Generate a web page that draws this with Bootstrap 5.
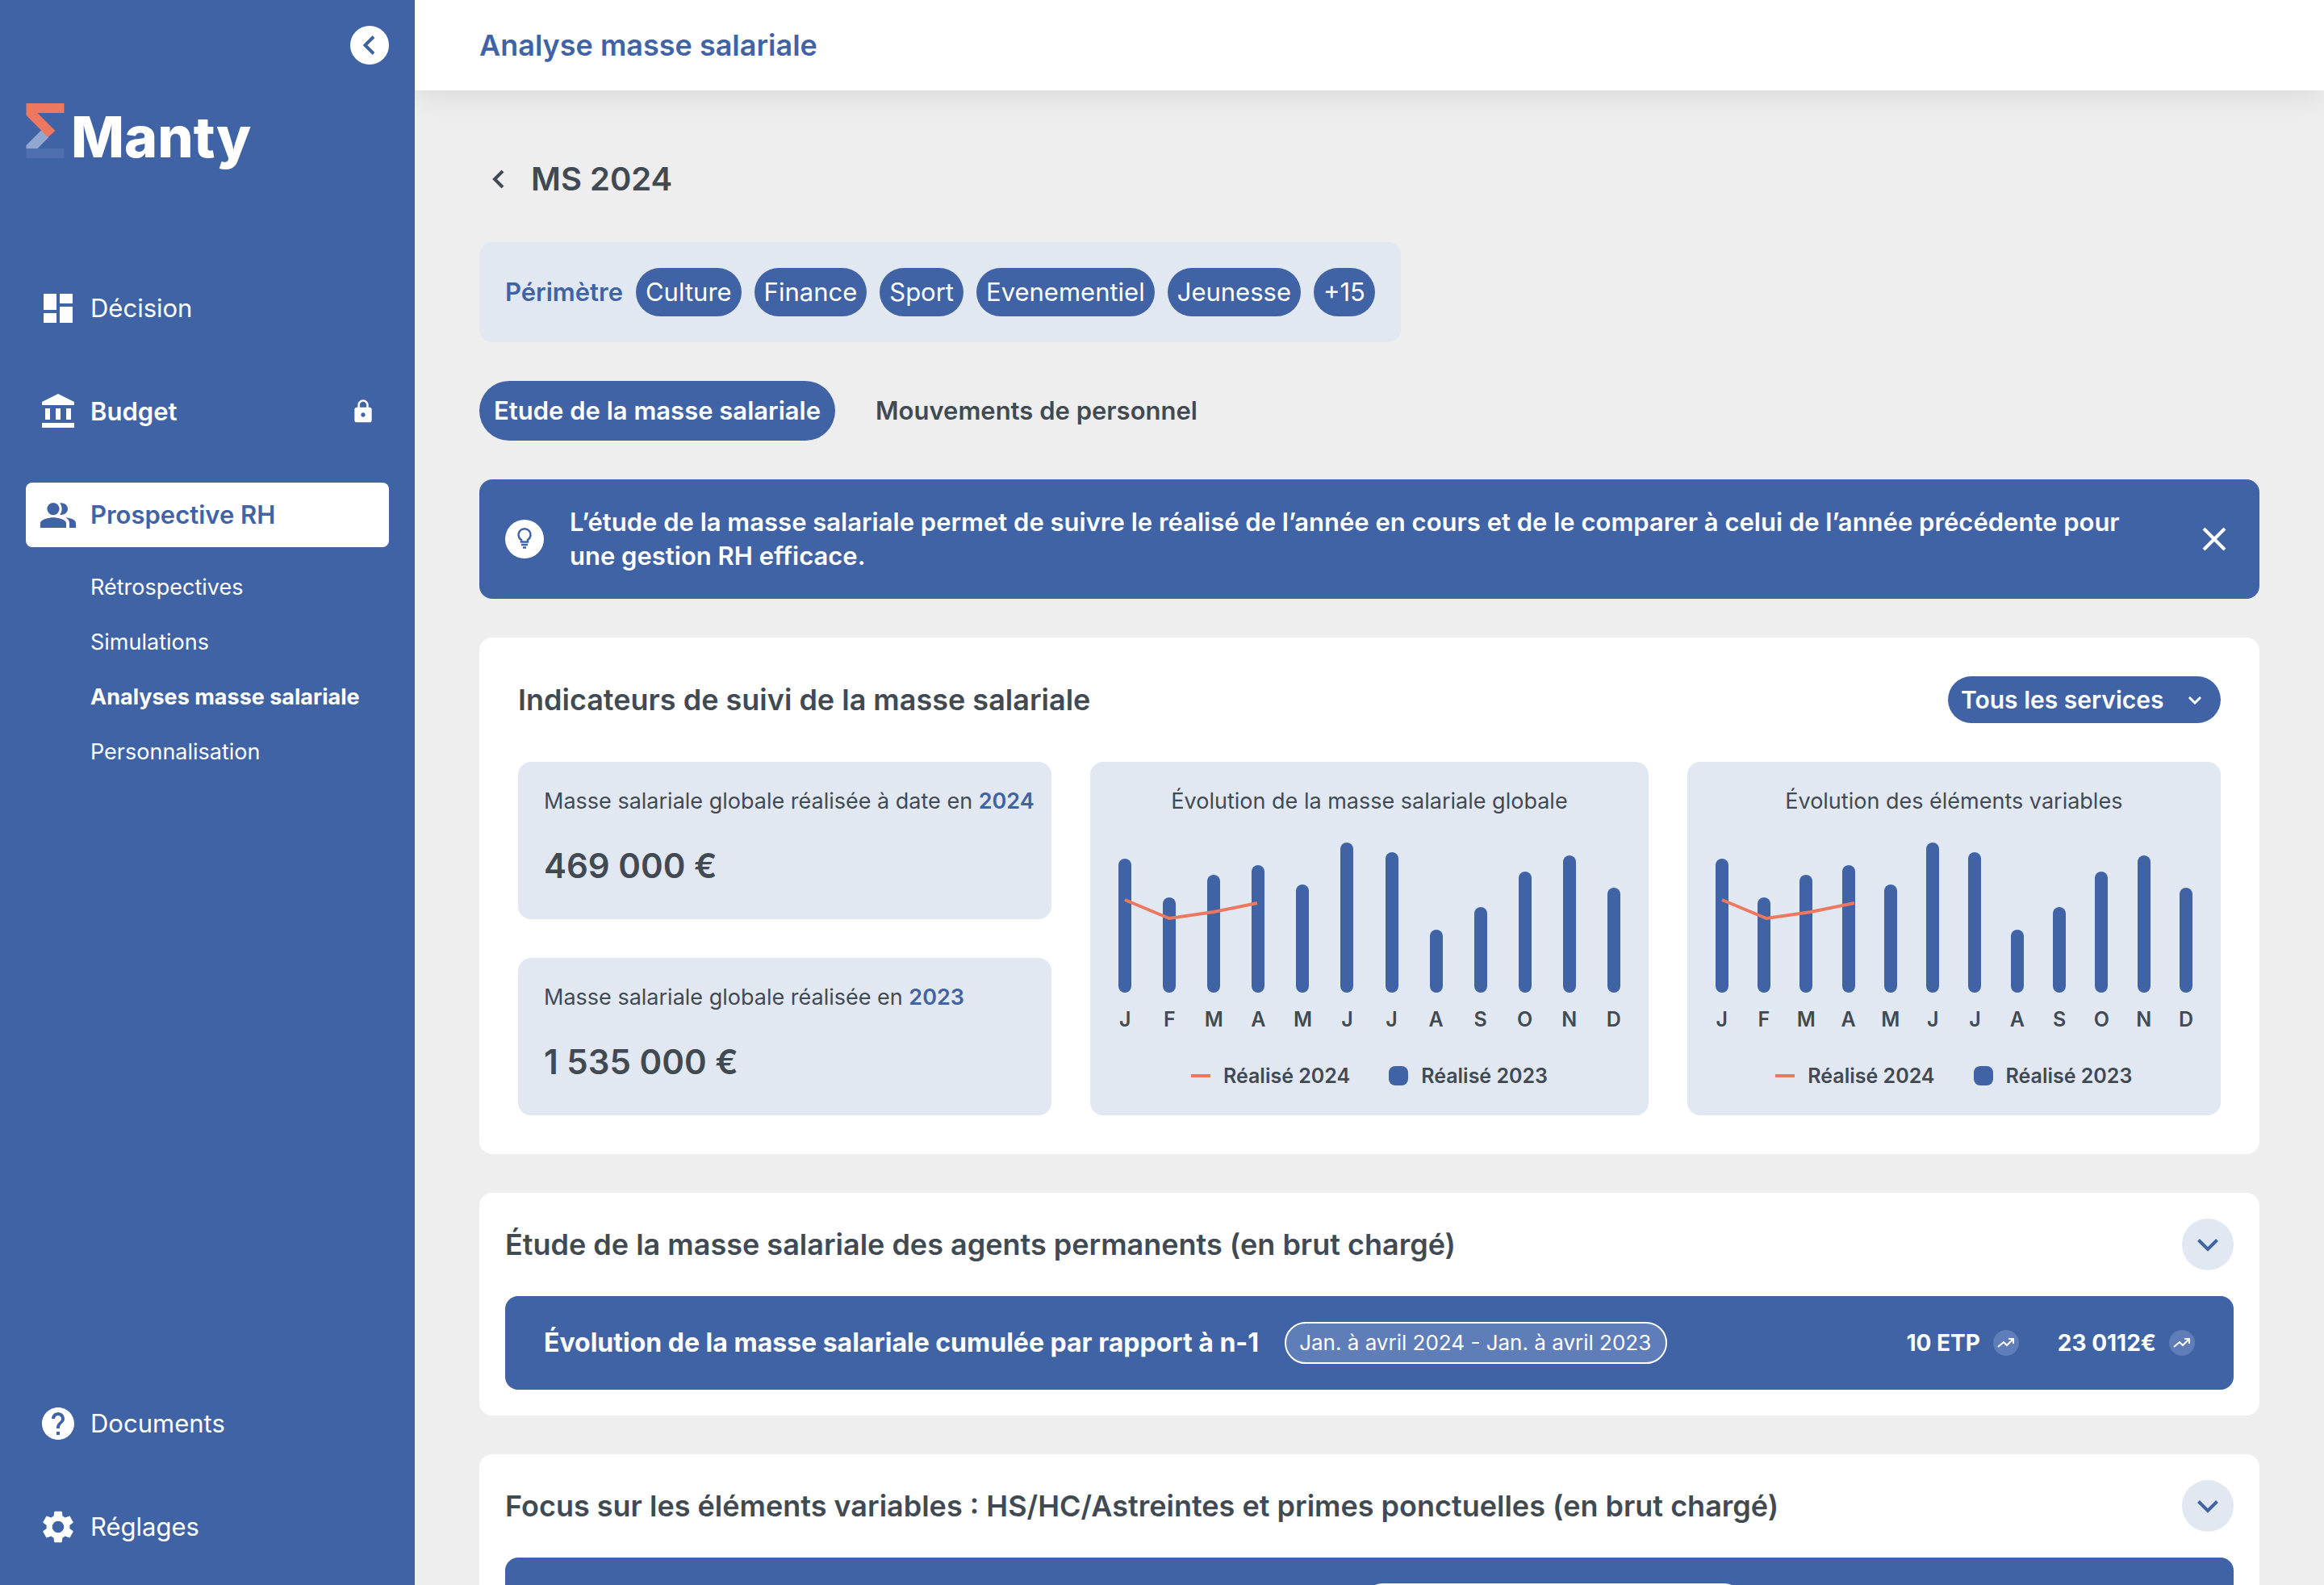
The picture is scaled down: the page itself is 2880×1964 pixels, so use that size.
<!DOCTYPE html>
<html lang="fr">
<head>
<meta charset="utf-8">
<meta name="viewport" content="width=device-width, initial-scale=1">
<title>Manty – Analyse masse salariale</title>
<link rel="stylesheet" href="https://cdn.jsdelivr.net/npm/bootstrap@5.3.0/dist/css/bootstrap.min.css">
<style>
:root{--brand:#4063a5;--pale:#e1e8f2;--ink:#414a53;--coral:#eb785f;--soft:#5f7db8}
body{font-family:Inter,"Open Sans",sans-serif;font-size:31px;line-height:42px;color:var(--ink);background:#eee}
h1,h2,h3,p{margin:0}
svg{display:block;flex:none}
button{border:0;padding:0;background:none;color:inherit}
.text-brand{color:var(--brand)}
.bg-brand{background:var(--brand);color:#fff}
.bg-pale{background:var(--pale)}
.round-lg{border-radius:16px}
.shell{height:100vh;overflow:hidden}
.sidebar{width:514px;flex:none;padding:32px;background:var(--brand);color:#fff}
.sidebar a{color:inherit;text-decoration:none}
.collapse-btn{width:48px;height:48px;background:#fff;color:var(--brand)}
.brand{margin-top:48px;gap:8px;height:70px}
.brand-name{font-size:70px;font-weight:800;line-height:84px}
.menu{margin-top:144px;gap:48px}
.menu-item{height:80px;padding:0 16px;gap:16px;border-radius:8px}
.menu-item.active{background:#fff;color:var(--brand)}
.submenu{margin-top:-32px;padding-left:80px;font-size:27px}
.submenu a{line-height:68px;white-space:nowrap}
.topbar{height:112px;flex:none;padding:0 80px;background:#fff;box-shadow:0 4px 40px rgba(0,0,0,.1);z-index:1}
.title-md{font-size:36px;font-weight:600;line-height:42px}
.content{padding:80px 80px 0;gap:48px}
.page-title{font-size:40px;font-weight:600;line-height:60px}
.back-btn{width:48px;height:60px}
.perimeter{padding:32px;gap:16px}
.chip{height:60px;padding:0 12px;border-radius:30px;line-height:60px}
.tabs{gap:32px}
.tabs .nav-link{height:74px;padding:0 18px;border-radius:37px;color:var(--ink);font-size:31px;font-weight:600;line-height:74px}
.tabs .nav-link.active{background:var(--brand);color:#fff}
.tip{padding:32px;gap:32px;font-weight:600}
.tip-icon{width:48px;height:48px;background:#fff;color:var(--brand)}
.panel{background:#fff;padding:48px}
.service-select{height:58px;width:338px;padding:0 16px;border:0;border-radius:29px;font-size:30px;font-weight:600;appearance:none;
 background:var(--brand) url("data:image/svg+xml,%3Csvg xmlns='http://www.w3.org/2000/svg' viewBox='0 0 24 24'%3E%3Cpath d='M5 9l7 7 7-7' fill='none' stroke='%23fff' stroke-width='3'/%3E%3C/svg%3E") no-repeat right 20px center/24px;color:#fff}
.indicators{display:grid;grid-template-columns:minmax(0,22fr) minmax(0,23fr) minmax(0,22fr);gap:48px;margin-top:48px;font-size:27px;line-height:34px}
.kpis{gap:48px}
.kpi{padding:32px 16px 32px 32px;flex:1;gap:38px;white-space:nowrap}
.kpi-value{font-size:42px;font-weight:600;line-height:50px}
.chart{padding:32px}
.chart-title{font-size:27px;font-weight:400;line-height:34px}
.plot{height:186px;margin-top:34px}
.bar{width:16px;border-radius:8px;background:var(--brand)}
.slot{width:22px}
.trend{position:absolute;left:0;top:0}
.months{margin-top:16px;font-size:25px;font-weight:600}
.legend{gap:48px;margin-top:36px;font-size:25px;font-weight:600}
.key-line{width:24px;height:4px;background:var(--coral)}
.key-box{width:24px;height:24px;border-radius:8px;background:var(--brand)}
.fold{background:#fff;padding:32px;gap:32px;flex:none}
.fold-btn{width:64px;height:64px;background:var(--pale);color:var(--brand)}
.fold-row{height:116px;padding:0 48px;gap:32px;font-size:32px;font-weight:700;white-space:nowrap}
.fold-space{width:48%}
.period{height:52px;min-width:474px;padding:0 16px;border:2px solid #fff;border-radius:26px;background:var(--soft);font-size:26px;font-weight:400;line-height:48px}
.figures{gap:48px;font-size:28px}
.trend-icon{width:32px;height:32px;background:var(--soft)}
</style>
<script src="https://cdn.jsdelivr.net/npm/bootstrap@5.3.0/dist/js/bootstrap.bundle.min.js"></script>
</head>
<body>
<div class="shell d-flex">
  <aside class="sidebar d-flex flex-column">
    <button class="collapse-btn rounded-circle align-self-end" aria-label="Replier le menu">
      <svg width="48" height="48" fill="none" stroke="currentColor" stroke-width="4"><path d="M29 13.500 18.500 24 29 34.500"/></svg>
    </button>
    <a href="#" class="brand d-flex">
      <svg width="48" height="68" viewBox="0 0 47 68"><path fill="#4f70af" d="M0 56h47v12H0z"/><path fill="#92a7cf" d="M0 52 19 33l9 9-14 14H0z"/><path fill="#eb785f" d="M0 0h47v12H14l22 22-9 8L0 15z"/></svg>
      <span class="brand-name">Manty</span>
    </a>
    <nav class="menu d-flex flex-column flex-grow-1">
      <a href="#" class="menu-item d-flex align-items-center">
        <svg width="48" height="48" viewBox="0 0 24 24" fill="currentColor"><path d="M3 13h8V3H3zm0 8h8v-6H3zm10 0h8V11h-8zm0-18v6h8V3z"/></svg>Décision
      </a>
      <a href="#" class="menu-item d-flex align-items-center fw-semibold">
        <svg width="48" height="48" viewBox="0 0 24 24" fill="currentColor"><path d="M12 1 2 6v2h20V6zM4 10h3v7H4zm6.500 0h3v7h-3zm6.500 0h3v7h-3zM2 19h20v3H2z"/></svg>Budget
        <svg class="ms-auto" width="32" height="32" viewBox="0 0 24 24" fill="currentColor"><path d="M18 8h-1V6c0-2.760-2.240-5-5-5S7 3.240 7 6v2H6c-1.100 0-2 .9-2 2v10c0 1.100.9 2 2 2h12c1.100 0 2-.9 2-2V10c0-1.100-.9-2-2-2zm-6 9c-1.100 0-2-.9-2-2s.9-2 2-2 2 .9 2 2-.9 2-2 2zm3.100-9H8.900V6c0-1.710 1.390-3.100 3.100-3.100s3.100 1.390 3.100 3.100z"/></svg>
      </a>
      <a href="#" class="menu-item active d-flex align-items-center fw-semibold">
        <svg width="48" height="48" viewBox="0 0 24 24" fill="currentColor"><circle cx="9" cy="8.300" r="3.800"/><path d="M16.670 13.630C18.040 14.560 19 15.600 19 17v3h4v-3c0-2-3.570-3.100-6.330-3.370zM14 12c2.210 0 4-1.600 4-3.700s-1.790-3.700-4-3.700c-.3 0-.6 0-.9.100.8 1 1.200 2.200 1.200 3.600s-.4 2.600-1.200 3.600c.3.100.6.100.9.100zM9 13.600c-2.670 0-8 1.200-8 3.400v3h16v-3c0-2.200-5.330-3.400-8-3.400z"/></svg>Prospective RH
      </a>
      <div class="submenu d-flex flex-column">
        <a href="#">Rétrospectives</a>
        <a href="#">Simulations</a>
        <a href="#" class="fw-bold">Analyses masse salariale</a>
        <a href="#">Personnalisation</a>
      </div>
      <a href="#" class="menu-item mt-auto d-flex align-items-center">
        <svg width="48" height="48" viewBox="0 0 24 24" fill="currentColor"><path d="M12 2C6.480 2 2 6.480 2 12s4.480 10 10 10 10-4.480 10-10S17.520 2 12 2zm1 17h-2v-2h2v2zm2.070-7.750-.9.920C13.450 12.900 13 13.500 13 15h-2v-.5c0-1.100.450-2.100 1.170-2.830l1.240-1.260c.370-.360.590-.860.590-1.410 0-1.100-.9-2-2-2s-2 .9-2 2H8c0-2.210 1.790-4 4-4s4 1.790 4 4c0 .880-.360 1.680-.930 2.250z"/></svg>Documents
      </a>
      <a href="#" class="menu-item d-flex align-items-center">
        <svg width="48" height="48" viewBox="0 0 24 24" fill="currentColor"><path d="M19.140 12.940c.04-.3.06-.61.06-.94 0-.32-.02-.64-.07-.94l2.030-1.580c.18-.14.23-.41.12-.61l-1.920-3.320c-.12-.22-.37-.29-.59-.22l-2.390.96c-.5-.38-1.030-.7-1.620-.94l-.36-2.540c-.04-.24-.24-.41-.48-.41h-3.840c-.24 0-.43.17-.47.41l-.36 2.540c-.59.24-1.130.57-1.620.94l-2.390-.96c-.22-.08-.47 0-.59.22L2.740 8.870c-.12.21-.08.47.12.61l2.030 1.580c-.05.3-.09.63-.09.94s.02.64.07.94l-2.030 1.580c-.18.14-.23.41-.12.61l1.920 3.320c.12.22.37.29.59.22l2.390-.96c.5.38 1.030.7 1.620.94l.36 2.540c.05.24.24.41.48.41h3.840c.24 0 .44-.17.47-.41l.36-2.540c.59-.24 1.130-.56 1.620-.94l2.390.96c.22.08.47 0 .59-.22l1.920-3.320c.12-.22.07-.47-.12-.61l-2.010-1.580zM12 15.600c-1.980 0-3.600-1.620-3.600-3.600s1.620-3.600 3.600-3.600 3.600 1.620 3.600 3.600-1.620 3.600-3.600 3.600z"/></svg>Réglages
      </a>
    </nav>
  </aside>

  <div class="d-flex flex-column flex-grow-1 overflow-hidden">
    <header class="topbar d-flex align-items-center">
      <span class="title-md text-brand">Analyse masse salariale</span>
    </header>

    <main class="content d-flex flex-column">
      <div class="d-flex align-items-center gap-3">
        <button class="back-btn" aria-label="Retour"><svg width="48" height="60" fill="none" stroke="currentColor" stroke-width="4"><path d="M29 20 19 30l10 10"/></svg></button>
        <h1 class="page-title">MS 2024</h1>
      </div>

      <div class="perimeter bg-pale round-lg d-flex align-items-center align-self-start">
        <span class="fw-semibold text-brand">Périmètre</span>
        <span class="chip bg-brand">Culture</span>
        <span class="chip bg-brand">Finance</span>
        <span class="chip bg-brand">Sport</span>
        <span class="chip bg-brand">Evenementiel</span>
        <span class="chip bg-brand">Jeunesse</span>
        <span class="chip bg-brand">+15</span>
      </div>

      <div class="tabs nav nav-pills" role="tablist">
        <button class="nav-link active" role="tab" aria-selected="true">Etude de la masse salariale</button>
        <button class="nav-link" role="tab" aria-selected="false">Mouvements de personnel</button>
      </div>

      <div class="tip bg-brand round-lg d-flex align-items-center">
        <span class="tip-icon rounded-circle flex-shrink-0">
          <svg width="48" height="48" fill="none" stroke="currentColor" stroke-width="2.500"><path d="M20 27.500v-2.500a7.500 7.500 0 1 1 8 0v2.500z"/><path d="M20 31h8M22 34.500h4"/></svg>
        </span>
        <p class="flex-grow-1">L’étude de la masse salariale permet de suivre le réalisé de l’année en cours et de le comparer à celui de l’année précédente pour une gestion RH efficace.</p>
        <button aria-label="Fermer"><svg width="48" height="48" fill="none" stroke="currentColor" stroke-width="4"><path d="m11 11 26 26M37 11 11 37"/></svg></button>
      </div>

      <section class="panel round-lg">
        <div class="d-flex align-items-center justify-content-between">
          <h2 class="title-md">Indicateurs de suivi de la masse salariale</h2>
          <select class="service-select" aria-label="Services"><option>Tous les services</option></select>
        </div>
        <div class="indicators">
          <div class="kpis d-flex flex-column">
            <div class="kpi bg-pale round-lg d-flex flex-column">
              <p>Masse salariale globale réalisée à date en <span class="fw-semibold text-brand">2024</span></p>
              <p class="kpi-value">469 000 €</p>
            </div>
            <div class="kpi bg-pale round-lg d-flex flex-column">
              <p>Masse salariale globale réalisée en <span class="fw-semibold text-brand">2023</span></p>
              <p class="kpi-value">1 535 000 €</p>
            </div>
          </div>
          <div class="chart bg-pale round-lg"><h3 class="chart-title text-center">Évolution de la masse salariale globale</h3></div>
          <div class="chart bg-pale round-lg"><h3 class="chart-title text-center">Évolution des éléments variables</h3></div>
        </div>
      </section>

      <section class="fold round-lg d-flex flex-column">
        <div class="d-flex align-items-center justify-content-between">
          <h2 class="title-md">Étude de la masse salariale des agents permanents (en brut chargé)</h2>
          <button class="fold-btn rounded-circle" aria-label="Déplier"><svg width="64" height="64" fill="none" stroke="currentColor" stroke-width="4"><path d="M20.500 26.500 32 38l11.500-11.500"/></svg></button>
        </div>
        <div class="fold-row bg-brand round-lg d-flex align-items-center">
          <span>Évolution de la masse salariale cumulée par rapport à n-1</span>
          <span class="period">Jan. à avril 2024 - Jan. à avril 2023</span>
          <div class="figures d-flex ms-auto">
            <span class="d-flex align-items-center gap-3">10 ETP <span class="trend-icon rounded-circle"><svg width="32" height="32" fill="none" stroke="#fff" stroke-width="2"><path d="m6 21 7-6 4 4 8-8M19 11h6v6"/></svg></span></span>
            <span class="d-flex align-items-center gap-3">23 0112€ <span class="trend-icon rounded-circle"><svg width="32" height="32" fill="none" stroke="#fff" stroke-width="2"><path d="m6 21 7-6 4 4 8-8M19 11h6v6"/></svg></span></span>
          </div>
        </div>
      </section>

      <section class="fold round-lg d-flex flex-column">
        <div class="d-flex align-items-center justify-content-between">
          <h2 class="title-md">Focus sur les éléments variables : HS/HC/Astreintes et primes ponctuelles (en brut chargé)</h2>
          <button class="fold-btn rounded-circle" aria-label="Déplier"><svg width="64" height="64" fill="none" stroke="currentColor" stroke-width="4"><path d="M20.500 26.500 32 38l11.500-11.500"/></svg></button>
        </div>
        <div class="fold-row bg-brand round-lg d-flex align-items-center">
          <span class="fold-space"></span>
          <span class="period"></span>
        </div>
      </section>
    </main>
  </div>
</div>
<script>
const months = [['J',166],['F',118],['M',146],['A',158],['M',134],['J',186],['J',174],['A',78],['S',106],['O',150],['N',170],['D',130]];
const row = fn => months.map(fn).join('');
document.querySelectorAll('.chart').forEach(chart => chart.insertAdjacentHTML('beforeend', `
  <div class="plot position-relative d-flex align-items-end justify-content-between">
    ${row(m => `<div class="slot d-flex justify-content-center"><div class="bar" style="height:${m[1]}px"></div></div>`)}
    <svg class="trend" width="190" height="186" fill="none" stroke="#eb785f" stroke-width="4"><path d="m11 71 55 23 55-8 54-11"/></svg>
  </div>
  <div class="months d-flex justify-content-between">${row(m => `<span class="slot d-flex justify-content-center">${m[0]}</span>`)}</div>
  <div class="legend d-flex justify-content-center">
    <span class="d-flex align-items-center gap-3"><i class="key-line"></i>Réalisé 2024</span>
    <span class="d-flex align-items-center gap-3"><i class="key-box"></i>Réalisé 2023</span>
  </div>`));
</script>
</body>
</html>
